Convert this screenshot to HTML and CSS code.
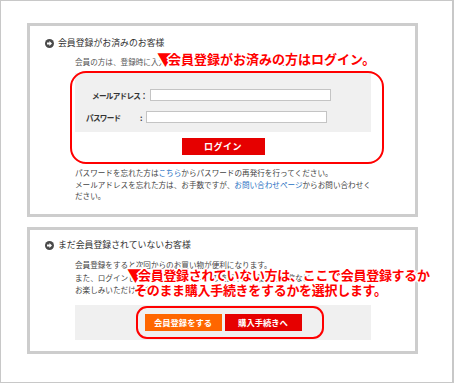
FILE: index.html
```html
<!DOCTYPE html>
<html lang="ja">
<head>
    <meta charset="UTF-8">
    <title>ログイン</title>
    <link rel="stylesheet" href="styles.css">
</head>
<body>
    <div class="frame">
        <!-- Members -->
        <div class="panel panel-login">
            <h2 class="panel-title">
                <svg class="arrow-icon" width="9" height="9" viewBox="0 0 9 9"><circle cx="4.5" cy="4.5" r="4.5" fill="#4a4a4a"/><path d="M2 3.6h2.4V2L7 4.5 4.4 7V5.4H2z" fill="#fff"/></svg>
                会員登録がお済みのお客様
            </h2>
            <div class="panel-body">
                <p class="intro">会員の方は、登録時に入力されたID・パスワードでログインしてください。</p>
                <div class="login-box">
                    <div class="form-row row-mail">
                        <span class="label">メールアドレス：</span>
                        <input type="text" class="field field-mail">
                    </div>
                    <div class="form-row row-pass">
                        <span class="label label-pass">パスワード</span>
                        <span class="label">:</span>
                        <input type="password" class="field field-pass">
                    </div>
                </div>
                <div class="btn-row">
                    <button class="btn btn-login">ログイン</button>
                </div>
                <p class="note note-first">パスワードを忘れた方は<a href="#">こちら</a>からパスワードの再発行を行ってください。</p>
                <p class="note">メールアドレスを忘れた方は、お手数ですが、<a href="#">お問い合わせページ</a>からお問い合わせください。</p>
            </div>
        </div>

        <!-- Guests -->
        <div class="panel panel-guest">
            <h2 class="panel-title">
                <svg class="arrow-icon" width="9" height="9" viewBox="0 0 9 9"><circle cx="4.5" cy="4.5" r="4.5" fill="#4a4a4a"/><path d="M2 3.6h2.4V2L7 4.5 4.4 7V5.4H2z" fill="#fff"/></svg>
                まだ会員登録されていないお客様
            </h2>
            <div class="panel-body">
                <p class="guest-text">会員登録をすると次回からのお買い物が便利になります。<br>また、ログインしていただくとポイントの確認や購入履歴の閲覧など<br>お楽しみいただけます。</p>
                <div class="choice-box">
                    <button class="btn btn-signup">会員登録をする</button>
                    <button class="btn btn-buy">購入手続きへ</button>
                </div>
            </div>
        </div>

        <!-- Annotations -->
        <div class="callout-ring ring-login"></div>
        <div class="callout-ring ring-guest"></div>
        <p class="callout callout-login"><span class="tri">▼</span>会員登録がお済みの方はログイン。</p>
        <p class="callout callout-guest"><span class="tri">▼</span>会員登録されていない方は、ここで会員登録するか<span class="second">そのまま購入手続きをするかを選択します。</span></p>
    </div>
</body>
</html>
```

FILE: styles.css
```css
/* General */
body, html {
    margin: 0;
    padding: 0;
    background: #fff;
    font-family: "Noto Sans CJK JP", "Noto Sans", sans-serif;
    color: #444;
}
.frame {
    position: relative;
    width: 454px;
    height: 383px;
    box-sizing: border-box;
    border: 1px solid #c8c8c8;
    border-right-width: 2px;
    padding: 22px 0 0 26px;
    overflow: hidden;
}

/* Panels */
.panel {
    width: 391px;
    box-sizing: border-box;
    border: 3px solid #cdcdcd;
    padding: 12px 15px 12px;
    background: #fff;
}
.panel-login {
    height: 194px;
}
.panel-guest {
    margin-top: 10px;
    height: 127px;
    padding-top: 10px;
}
.panel-title {
    display: flex;
    align-items: center;
    gap: 4px;
    margin: 0;
    font-size: 8.9px;
    line-height: 10px;
    font-weight: normal;
    color: #333;
}
.panel-body {
    margin-left: 30px;
    width: 296px;
}
.intro {
    margin: 9px 0 0;
    font-size: 7.6px;
    line-height: 10px;
    white-space: nowrap;
    color: #555;
}

/* Login form */
.login-box {
    margin-top: 6px;
    height: 59px;
    box-sizing: border-box;
    background: #f0f0f0;
    padding-top: 16px;
}
.form-row {
    display: flex;
    align-items: center;
    height: 12px;
}
.row-mail {
    padding-left: 17px;
}
.row-pass {
    margin-top: 10px;
    padding-left: 11px;
}
.label {
    font-size: 7.6px;
    font-weight: bold;
    letter-spacing: -0.7px;
    color: #333;
    white-space: nowrap;
}
.label-pass {
    width: 54px;
}
.field {
    height: 12px;
    box-sizing: border-box;
    border: 1px solid #c4c4c4;
    background: #fff;
    padding: 0;
}
.field-mail {
    width: 181px;
    margin-left: 3px;
}
.field-pass {
    width: 181px;
    margin-left: 4px;
}
.btn-row {
    display: flex;
    justify-content: center;
    margin-top: 6px;
}
.btn {
    height: 17px;
    border: none;
    padding: 0;
    color: #fff;
    font-family: inherit;
    font-weight: bold;
    font-size: 8.3px;
    cursor: pointer;
}
.btn-login {
    width: 83px;
    background: #e60000;
    font-size: 9px;
    letter-spacing: 0.5px;
}
.note {
    margin: 0;
    font-size: 7.6px;
    line-height: 11.5px;
    color: #444;
}
.note-first {
    margin-top: 12px;
}
.note a {
    color: #1e6fc2;
    text-decoration: none;
}

/* Guest */
.guest-text {
    margin: 9px 0 0;
    font-size: 7.6px;
    line-height: 12.5px;
    white-space: nowrap;
    color: #444;
}
.choice-box {
    margin-top: 8px;
    height: 35px;
    background: #f0f0f0;
    display: flex;
    justify-content: center;
    align-items: center;
    gap: 3px;
}
.btn-signup {
    width: 77px;
    background: #ff6600;
}
.btn-buy {
    width: 77px;
    background: #e60000;
}

/* Annotations */
.callout-ring {
    position: absolute;
    box-sizing: border-box;
    border: 2px solid #f00;
}
.ring-login {
    left: 69px;
    top: 70px;
    width: 314px;
    height: 93px;
    border-radius: 16px;
}
.ring-guest {
    left: 135px;
    top: 305px;
    width: 188px;
    height: 33px;
    border-radius: 11px;
}
.callout {
    position: absolute;
    margin: 0;
    font-size: 13px;
    line-height: 15px;
    font-weight: bold;
    color: #f00;
    white-space: nowrap;
    text-shadow: 1px 0 0 #fff, -1px 0 0 #fff, 0 1px 0 #fff, 0 -1px 0 #fff,
        2px 0 0 #fff, -2px 0 0 #fff, 0 2px 0 #fff, 0 -2px 0 #fff,
        1px 1px 0 #fff, -1px -1px 0 #fff, 1px -1px 0 #fff, -1px 1px 0 #fff;
}
.callout .tri {
    font-size: 17px;
    letter-spacing: -6px;
    vertical-align: top;
}
.callout-login {
    left: 156px;
    top: 50px;
}
.callout-guest {
    left: 126px;
    top: 266px;
    letter-spacing: -0.3px;
}
.callout .second {
    display: block;
    margin-left: 7px;
}
```
